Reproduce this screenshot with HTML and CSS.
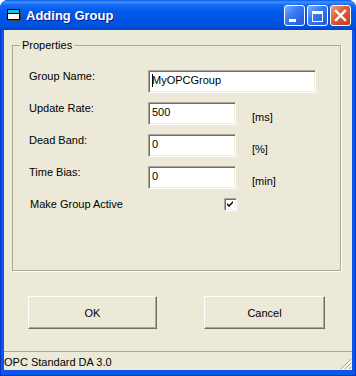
FILE: index.html
```html
<!DOCTYPE html>
<html lang="en">
<head>
    <meta charset="UTF-8">
    <title>Adding Group</title>
    <link rel="stylesheet" href="styles.css">
</head>
<body>

<div class="window">
    <div class="titlebar">
        <svg class="app-icon" width="15" height="13" viewBox="0 0 15 13">
            <rect x="2" y="2" width="12" height="10" fill="#404040"/>
            <rect x="0.5" y="0.5" width="12" height="10" fill="#fff" stroke="#000"/>
            <rect x="1" y="1" width="11" height="3" fill="#10c8d8"/>
            <line x1="1" y1="4.5" x2="12" y2="4.5" stroke="#000"/>
        </svg>
        <span class="title">Adding Group</span>
        <div class="caption-buttons">
            <button class="cap"><svg width="21" height="21"><rect x="5" y="14" width="7" height="3" fill="#fff"/></svg></button>
            <button class="cap"><svg width="21" height="21"><rect x="5.5" y="6.5" width="10" height="10" fill="none" stroke="#fff"/><rect x="5" y="6" width="11" height="3" fill="#fff"/></svg></button>
            <button class="cap close"><svg width="21" height="21"><path d="M6 6 L15 15 M15 6 L6 15" stroke="#fff" stroke-width="2.4" stroke-linecap="square"/></svg></button>
        </div>
    </div>

    <div class="frame">
        <div class="client">
            <fieldset class="group">
                <legend>Properties</legend>

                <div class="row">
                    <label>Group Name:</label>
                    <div class="field wide"><span class="caret"></span>MyOPCGroup</div>
                </div>
                <div class="row">
                    <label>Update Rate:</label>
                    <div class="field">500</div>
                    <span class="unit">[ms]</span>
                </div>
                <div class="row">
                    <label>Dead Band:</label>
                    <div class="field">0</div>
                    <span class="unit">[%]</span>
                </div>
                <div class="row">
                    <label>Time Bias:</label>
                    <div class="field">0</div>
                    <span class="unit">[min]</span>
                </div>
                <div class="row check-row">
                    <label>Make Group Active</label>
                    <span class="checkbox">
                        <svg width="11" height="11" viewBox="0 0 11 11"><path d="M2 4 L4 6 L8 2 L8 4 L4 8 L2 6 Z" fill="#000"/></svg>
                    </span>
                </div>
            </fieldset>

            <div class="buttons">
                <button class="btn ok">OK</button>
                <button class="btn cancel">Cancel</button>
            </div>

            <div class="statusbar">
                <span>OPC Standard DA 3.0</span>
                <svg class="grip" width="12" height="12" viewBox="0 0 12 12">
                    <path d="M11 1 L1 11 M11 5 L5 11 M11 9 L9 11" stroke="#aca899" stroke-width="1"/>
                    <path d="M12 2 L2 12 M12 6 L6 12 M12 10 L10 12" stroke="#fff" stroke-width="1"/>
                </svg>
            </div>
        </div>
    </div>
</div>

</body>
</html>
```

FILE: styles.css
```css
body {
    margin: 0;
    background-color: #fff;
    font-family: "Liberation Sans", Arial, sans-serif;
    font-size: 11px;
    line-height: 13px;
    color: #000;
}
.window {
    width: 356px;
    height: 376px;
    display: flex;
    flex-direction: column;
    border-radius: 8px 8px 0 0;
    overflow: hidden;
    background-color: #0b55ea;
}
.titlebar {
    height: 30px;
    flex-shrink: 0;
    display: flex;
    align-items: center;
    background: linear-gradient(to bottom, #0a5ae8 0, #3d91fb 2px, #1469f4 5px, #0058ea 12px, #0054e3 22px, #0050da 27px, #0044c6 30px);
}
.app-icon {
    margin-left: 7px;
    margin-top: 1px;
}
.title {
    margin-left: 4px;
    color: #fff;
    font-weight: bold;
    font-size: 13px;
    text-shadow: 1px 1px 0 #0a1e8c;
}
.caption-buttons {
    margin-left: auto;
    margin-right: 5px;
    margin-top: 1px;
    display: flex;
    gap: 2px;
}
.cap {
    width: 21px;
    height: 21px;
    padding: 0;
    border: 1px solid #fff;
    border-radius: 3px;
    box-sizing: border-box;
    background: linear-gradient(135deg, #7ab0ff 0%, #3a7af2 40%, #2457dc 100%);
    display: flex;
}
.cap svg {
    margin: -1px;
}
.cap.close {
    background: linear-gradient(135deg, #f0a080 0%, #e06038 40%, #c43c18 100%);
}
.frame {
    flex: 1;
    display: flex;
    padding: 0 4px 6px;
    box-shadow: inset 1px 0 #0634c8, inset -1px 0 #0634c8, inset 0 -1px #0634c8;
}
.client {
    flex: 1;
    display: flex;
    flex-direction: column;
    background-color: #ece9d8;
}
.group {
    width: 329px;
    box-sizing: border-box;
    margin: 9px 0 0 8px;
    padding: 18px 0 50px 16px;
    border: 1px solid #aca899;
    box-shadow: 1px 1px 0 #fff;
}
.group legend {
    margin-left: -9px;
    padding: 0 2px;
}
.row {
    display: flex;
    align-items: flex-start;
    margin-bottom: 9px;
}
.row label {
    width: 119px;
}
.field {
    width: 88px;
    height: 23px;
    box-sizing: border-box;
    padding: 3px 0 0 3px;
    background-color: #fff;
    border: 1px solid;
    border-color: #aca899 #fff #fff #aca899;
    box-shadow: inset 1px 1px #716f64, inset -1px -1px #f1efe2;
}
.field.wide {
    width: 168px;
}
.caret {
    display: inline-block;
    width: 1px;
    height: 13px;
    margin-right: -1px;
    vertical-align: top;
    background-color: #000;
}
.unit {
    margin-left: 16px;
    padding-top: 9px;
}
.check-row {
    margin-top: 6px;
    align-items: center;
}
.check-row label {
    width: 194px;
    padding-left: 1px;
}
.checkbox {
    width: 13px;
    height: 13px;
    box-sizing: border-box;
    background-color: #fff;
    border: 1px solid;
    border-color: #aca899 #fff #fff #aca899;
    box-shadow: inset 1px 1px #716f64, inset -1px -1px #f1efe2;
    display: flex;
    align-items: center;
    justify-content: center;
}
.buttons {
    display: flex;
    margin-top: 25px;
    padding-left: 24px;
    gap: 47px;
}
.btn {
    height: 33px;
    padding: 0;
    font-family: inherit;
    font-size: 11px;
    color: #000;
    background-color: #ece9d8;
    border: 1px solid;
    border-color: #fff #716f64 #716f64 #fff;
    box-shadow: inset -1px -1px #aca899;
}
.btn.ok {
    width: 129px;
}
.btn.cancel {
    width: 121px;
}
.statusbar {
    flex: 1;
    margin-top: 22px;
    display: flex;
    justify-content: space-between;
    padding-top: 4px;
    border-top: 1px solid #aca899;
}
.grip {
    align-self: flex-end;
}
```
